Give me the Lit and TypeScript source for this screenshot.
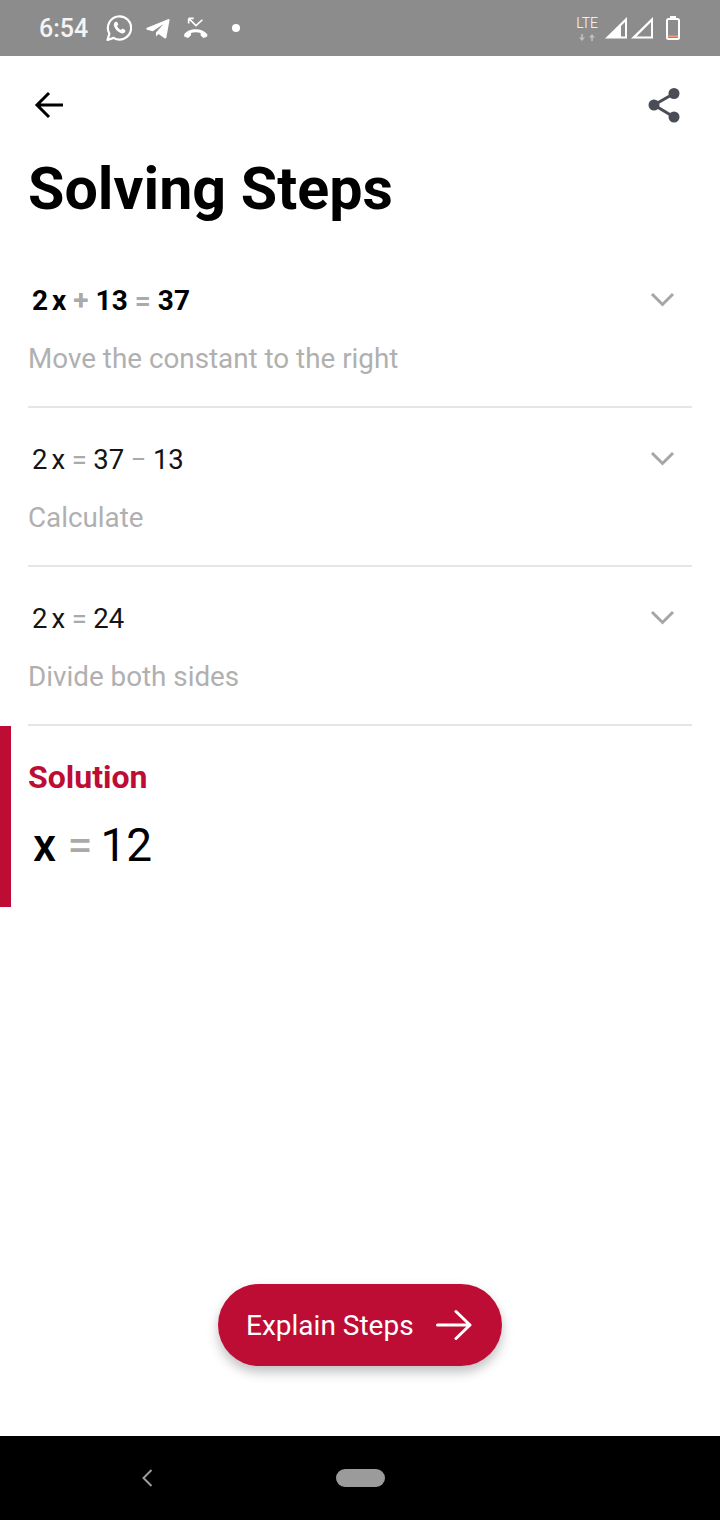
import { customElement, property } from "lit/decorators.js";
import { css, html, LitElement, svg } from "lit";
import { classMap } from "lit/directives/class-map.js";

type Token = { t: string; op?: boolean };

const tok = (s: string): Token[] =>
  s.split(" ").map((t) => ({ t, op: t === "+" || t === "=" || t === "−" }));

const STEPS = [
  { eq: "2x + 13 = 37", hint: "Move the constant to the right", bold: true },
  { eq: "2x = 37 − 13", hint: "Calculate", bold: false },
  { eq: "2x = 24", hint: "Divide both sides", bold: false },
];

const chevron = svg`<path d="M2 2 L12.5 12.5 L23 2" fill="none" stroke="#a6a6a6" stroke-width="3"/>`;

@customElement("math-line")
export class MathLine extends LitElement {
  @property() value = "";

  render() {
    return html`${tok(this.value).map((p) =>
      p.op
        ? html`<span class="op">${p.t}</span>`
        : html`<span class="term">${p.t.replace("x", "")}${p.t.includes("x")
            ? html`<span class="var">x</span>`
            : ""}</span>`,
    )}`;
  }

  static styles = css`
    :host {
      display: flex;
      align-items: baseline;
      font-family: Roboto, sans-serif;
    }
    .op {
      color: #aaaaaa;
      margin: var(--op-margin, 0 6px);
    }
    .var {
      margin-left: var(--var-gap, 4px);
      font-weight: var(--var-weight, inherit);
    }
  `;
}

@customElement("app-root")
export class AppRoot extends LitElement {
  render() {
    return html`
      <div class="status">
        <div class="status-left">
          <span class="clock">6:54</span>
          <svg width="26" height="26" viewBox="0 0 26 26">
            <path d="M1.5 25 L3.4 18.6 A11.6 11.6 0 1 1 7.6 22.9 Z" fill="none" stroke="#fff" stroke-width="2.2" stroke-linejoin="round"/>
            <path d="M9.6 6.8 C8.2 7.6 7.4 9.2 8 11 C9.2 14.4 11.8 17 15.2 18.2 C17 18.8 18.6 18 19.4 16.4 L19.2 15 L16.4 13.6 L15 15 C13.2 14.2 11.8 12.8 11 11 L12.4 9.8 L11.2 6.9 Z" fill="#fff"/>
          </svg>
          <svg width="24" height="21" viewBox="0 0 26 22" class="tg">
            <path d="M0.5 10.5 L24.5 0.8 Q25.8 0.6 25.5 2 L22 21 Q21.4 22.4 20 21.6 L13.6 17 L10.8 19.6 L10.8 15.4 L19 6 L7.4 14 L1 12.4 Q0 11.4 0.5 10.5 Z" fill="#fff"/>
          </svg>
          <svg width="26" height="22" viewBox="0 0 28 24" class="call">
            <path d="M6 1.5 L14 9.5 L21 3 M6 1.5 L6 7 M6 1.5 L11.5 1.5" fill="none" stroke="#fff" stroke-width="1.8"/>
            <path d="M1 19 C6 11.5 21 11.5 26.5 19 L26 21.5 L22 23 L19 20 L19 17.4 C16 16.4 11.6 16.4 8.6 17.4 L8.6 20 L5.4 23 L1.4 21.5 Z" fill="#fff"/>
          </svg>
          <span class="dot"></span>
        </div>
        <div class="status-right">
          <div class="lte">
            <span>LTE</span>
            <svg width="18" height="7" viewBox="0 0 18 7">
              <path d="M4 7 L1 3.6 H3.2 V0 H4.8 V3.6 H7 Z M14 0 L11 3.4 H13.2 V7 H14.8 V3.4 H17 Z" fill="#fff" opacity=".45"/>
            </svg>
          </div>
          <svg width="23" height="22" viewBox="0 0 23 22" class="sig">
            <path d="M0 21.5 L22 0 V21.5 Z M16 19.5 H20 V5 L16 9 Z" fill="#fff" fill-rule="evenodd"/>
          </svg>
          <svg width="23" height="22" viewBox="0 0 23 22" class="sig">
            <path d="M0 21.5 L22 0 V21.5 Z M5.5 19.5 H20 V5 Z" fill="#fff" fill-rule="evenodd"/>
          </svg>
          <svg width="14" height="24" viewBox="0 0 14 24" class="batt">
            <path d="M4 0 H10 V2 H4 Z" fill="#fff"/>
            <rect x="1" y="3" width="12" height="20" rx="1.5" fill="none" stroke="#fff" stroke-width="2"/>
            <rect x="2" y="19.5" width="10" height="1.5" fill="#f79a7a"/>
          </svg>
        </div>
      </div>

      <main>
        <div class="toolbar">
          <svg width="30" height="28" viewBox="0 0 30 28">
            <path d="M29 14 H3 M15 2 L3 14 L15 26" fill="none" stroke="#000" stroke-width="3"/>
          </svg>
          <svg width="34" height="36" viewBox="0 0 34 36">
            <path d="M27 6.5 L7 18 L27 30" fill="none" stroke="#4a4d55" stroke-width="3"/>
            <circle cx="27" cy="6.5" r="5.5" fill="#4a4d55"/>
            <circle cx="7" cy="18" r="5.5" fill="#4a4d55"/>
            <circle cx="27" cy="30" r="5.5" fill="#4a4d55"/>
          </svg>
        </div>
        <h1>Solving Steps</h1>

        <div class="steps">
          ${STEPS.map(
            (s) => html`
              <div class="step">
                <div class="step-head">
                  <math-line
                    class=${classMap({ eq: true, strong: s.bold })}
                    value=${s.eq}
                  ></math-line>
                  <svg width="25" height="16" viewBox="0 0 25 16">${chevron}</svg>
                </div>
                <div class="hint">${s.hint}</div>
              </div>
            `,
          )}
        </div>

        <section class="solution">
          <div class="solution-label">Solution</div>
          <math-line class="answer" value="x = 12"></math-line>
        </section>

        <div class="spacer"></div>

        <button class="explain">
          <span>Explain Steps</span>
          <svg width="36" height="32" viewBox="0 0 36 32">
            <path d="M1.5 16 H34 M20 2.5 L34 16 L20 29.5" fill="none" stroke="#fff" stroke-width="3" stroke-linecap="round" stroke-linejoin="round"/>
          </svg>
        </button>
      </main>

      <nav>
        <svg width="12" height="18" viewBox="0 0 12 18">
          <path d="M10.5 1 L2.5 9 L10.5 17" fill="none" stroke="#9b9b9b" stroke-width="2"/>
        </svg>
        <span class="pill"></span>
      </nav>
    `;
  }

  static styles = css`
    :host {
      display: flex;
      flex-direction: column;
      height: 1520px;
      background: #fff;
      font-family: Roboto, sans-serif;
      color: #000;
    }

    .status {
      height: 56px;
      background: #8c8c8c;
      display: flex;
      align-items: center;
      justify-content: space-between;
      padding: 0 40px 0 39px;
      flex: none;
    }
    .status-left,
    .status-right {
      display: flex;
      align-items: center;
    }
    .clock {
      color: #f4f4f4;
      font-size: 25px;
      font-weight: 500;
      margin-right: 18px;
    }
    .tg {
      margin-left: 14px;
    }
    .call {
      margin-left: 13px;
    }
    .dot {
      width: 8px;
      height: 8px;
      border-radius: 50%;
      background: #fff;
      margin-left: 23px;
    }
    .lte {
      display: flex;
      flex-direction: column;
      align-items: center;
      color: #fff;
      font-size: 14px;
      line-height: 15px;
      font-weight: 300;
      margin-right: 7px;
    }
    .lte svg {
      margin-top: 3px;
    }
    .sig {
      margin-right: 3px;
    }
    .batt {
      margin-left: 9px;
    }

    main {
      flex: 1;
      display: flex;
      flex-direction: column;
      align-items: stretch;
    }
    .toolbar {
      display: flex;
      justify-content: space-between;
      align-items: center;
      padding: 31px 39px 0 34px;
      height: 36px;
    }
    h1 {
      margin: 33px 0 0 28px;
      font-size: 59.2px;
      line-height: 66px;
      font-weight: 700;
    }

    .steps {
      margin: 27px 28px 0 28px;
    }
    .step {
      display: flow-root;
      height: 157px;
      border-bottom: 2px solid #e6e6e6;
    }
    .step-head {
      display: flex;
      justify-content: space-between;
      align-items: center;
      height: 60px;
      margin-top: 21px;
      padding: 0 17px 0 4px;
    }
    .eq {
      font-size: 27.5px;
      font-weight: 400;
      color: #141414;
      --op-margin: 0 6.5px;
      --var-gap: 4px;
    }
    .strong {
      font-size: 28px;
      font-weight: 700;
      color: #000;
      --op-margin: 0 7px;
    }
    .hint {
      margin-top: 11px;
      font-size: 27.8px;
      line-height: 36px;
      color: #b0b0b0;
    }

    .solution {
      height: 181px;
      border-left: 11px solid #bd0d35;
      padding-left: 17px;
      box-sizing: border-box;
      display: flow-root;
    }
    .solution-label {
      margin-top: 32px;
      font-size: 32px;
      line-height: 38px;
      font-weight: 700;
      color: #bd0d35;
    }
    .answer {
      margin-top: 22px;
      padding-left: 5px;
      font-size: 46px;
      font-weight: 400;
      --op-margin: 0 8px 0 11px;
      --var-gap: 0;
      --var-weight: 500;
    }

    .spacer {
      flex: 1;
    }
    .explain {
      align-self: center;
      width: 284px;
      height: 82px;
      margin-bottom: 70px;
      border: 0;
      border-radius: 41px;
      background: #bd0d35;
      color: #fff;
      font-family: inherit;
      font-size: 28px;
      display: flex;
      align-items: center;
      justify-content: space-between;
      padding: 0 30px 0 28px;
      box-sizing: border-box;
      box-shadow: 0 6px 12px rgba(0, 0, 0, 0.25);
    }
    .explain span {
      margin-top: 1px;
    }

    nav {
      height: 84px;
      flex: none;
      background: #000;
      display: flex;
      align-items: center;
      padding-left: 141px;
    }
    .pill {
      width: 49px;
      height: 18px;
      border-radius: 9px;
      background: #9b9b9b;
      margin-left: 183px;
    }
  `;
}
